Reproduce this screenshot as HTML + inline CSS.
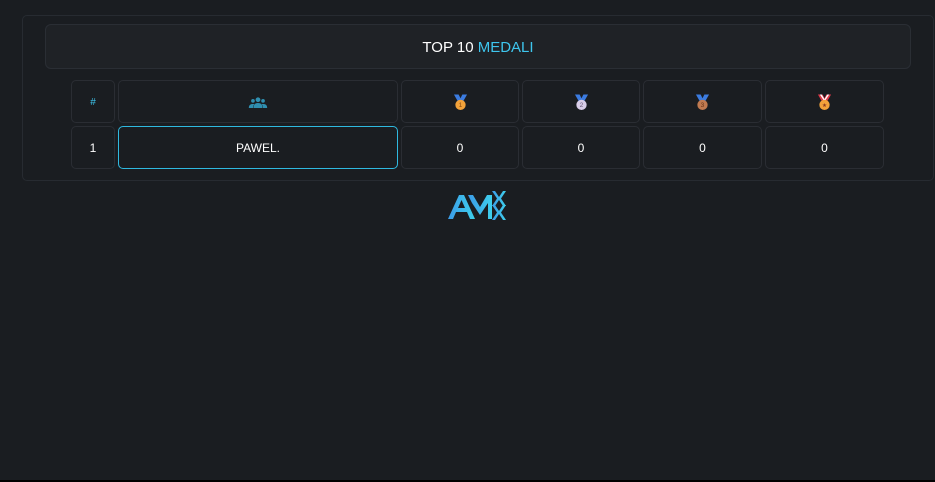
<!DOCTYPE html>
<html><head><style>
html,body{margin:0;padding:0;background:#1a1d21;width:935px;height:482px;overflow:hidden;font-family:"Liberation Sans",sans-serif;}
.bar{position:absolute;left:0;top:480px;width:935px;height:2px;background:#000}
.wrap{position:absolute;left:22px;top:15px;width:910px;height:164px;border:1px solid #272b31;border-radius:5px;}
.title{position:absolute;left:45px;top:24px;width:864px;height:43px;border:1px solid #2a2e34;border-radius:6px;background:#1f2226;color:#fff;font-size:15px;text-align:center;line-height:45px}
.title span{color:#3ec6ee}
.c{position:absolute;box-sizing:border-box;border:1px solid #2a2d33;border-radius:5px;display:flex;align-items:center;justify-content:center;color:#fff;font-size:12px;padding-top:1px}
.hl{border-color:#2fb9e0}
</style></head><body>
<div class="wrap"></div>
<div class="title">TOP 10 <span>MEDALI</span></div>
<div class="c" style="left:71px;top:80px;width:44px;height:43px;color:#3ec6ee;font-size:10px">#</div>
<div class="c" style="left:118px;top:80px;width:280px;height:43px">
<svg width="20" height="11" viewBox="0 0 20 12"><g fill="#2f8fb0"><circle cx="10" cy="3" r="2.6"/><circle cx="4.5" cy="4.2" r="2"/><circle cx="15.5" cy="4.2" r="2"/><path d="M5 12c0-4 2-5.5 5-5.5s5 1.5 5 5.5z"/><path d="M0 12c0-3 1.5-4.3 4.5-4.3 1 0 1.5.3 1.5.3C4.8 9 4.5 10.5 4.5 12z"/><path d="M20 12c0-3-1.5-4.3-4.5-4.3-1 0-1.5.3-1.5.3 1.2 1 1.5 2.5 1.5 4z"/></g></svg></div>
<div class="c" style="left:401px;top:80px;width:118px;height:43px"><svg width="15" height="17" viewBox="0 0 16 17"><path d="M1 0h5l2 4 2-4h5l-4 7H5z" fill="#3b7be0"/><circle cx="8" cy="11" r="5.5" fill="#f2a23a"/><text x="8" y="13.5" font-size="7" text-anchor="middle" fill="#8a4a10" font-family="Liberation Sans">1</text></svg></div>
<div class="c" style="left:522px;top:80px;width:118px;height:43px"><svg width="15" height="17" viewBox="0 0 16 17"><path d="M1 0h5l2 4 2-4h5l-4 7H5z" fill="#3b7be0"/><circle cx="8" cy="11" r="5.5" fill="#d8cde8"/><text x="8" y="13.5" font-size="7" text-anchor="middle" fill="#6a5a7a" font-family="Liberation Sans">2</text></svg></div>
<div class="c" style="left:643px;top:80px;width:119px;height:43px"><svg width="15" height="17" viewBox="0 0 16 17"><path d="M1 0h5l2 4 2-4h5l-4 7H5z" fill="#3b7be0"/><circle cx="8" cy="11" r="5.5" fill="#c07a50"/><text x="8" y="13.5" font-size="7" text-anchor="middle" fill="#6a3418" font-family="Liberation Sans">3</text></svg></div>
<div class="c" style="left:765px;top:80px;width:119px;height:43px"><svg width="15" height="17" viewBox="0 0 16 17"><path d="M1 0h5l2 4 2-4h5l-4 7H5z" fill="#e03a4a"/><path d="M3 0h2l3 5 3-5h2l-4 6H7z" fill="#fff"/><circle cx="8" cy="11" r="5.5" fill="#f2a23a"/><text x="8" y="13.5" font-size="6" text-anchor="middle" fill="#8a3a20" font-family="DejaVu Sans">★</text></svg></div>
<div class="c" style="left:71px;top:126px;width:44px;height:43px">1</div>
<div class="c hl" style="left:118px;top:126px;width:280px;height:43px">PAWEL.</div>
<div class="c" style="left:401px;top:126px;width:118px;height:43px">0</div>
<div class="c" style="left:522px;top:126px;width:118px;height:43px">0</div>
<div class="c" style="left:643px;top:126px;width:119px;height:43px">0</div>
<div class="c" style="left:765px;top:126px;width:119px;height:43px">0</div>
<svg style="position:absolute;left:448px;top:191px" width="60" height="29" viewBox="0 0 60 29">
<defs><linearGradient id="g" x1="0" x2="1"><stop offset="0" stop-color="#3b9be8"/><stop offset="1" stop-color="#3ed0ec"/></linearGradient></defs>
<g fill="url(#g)">
<path d="M0 28L11 4h5l11 24h-5l-3-7H8l-3 7zM10 17h7l-3.5-8z"/>
<path d="M22 4h5l7 12 7-12h5v24h-4V12l-8 12-8-12z" transform="translate(-2 0)"/>
<path d="M44 0h3l4 6 4-6h3l-5 7.5 5 7.5h-3l-4-6-4 6h-3l5-7.5z"/>
<path d="M44 14h3l4 6 4-6h3l-5 7.5 5 7.5h-3l-4-6-4 6h-3l5-7.5z"/>
</g></svg>
<div class="bar"></div>
</body></html>
